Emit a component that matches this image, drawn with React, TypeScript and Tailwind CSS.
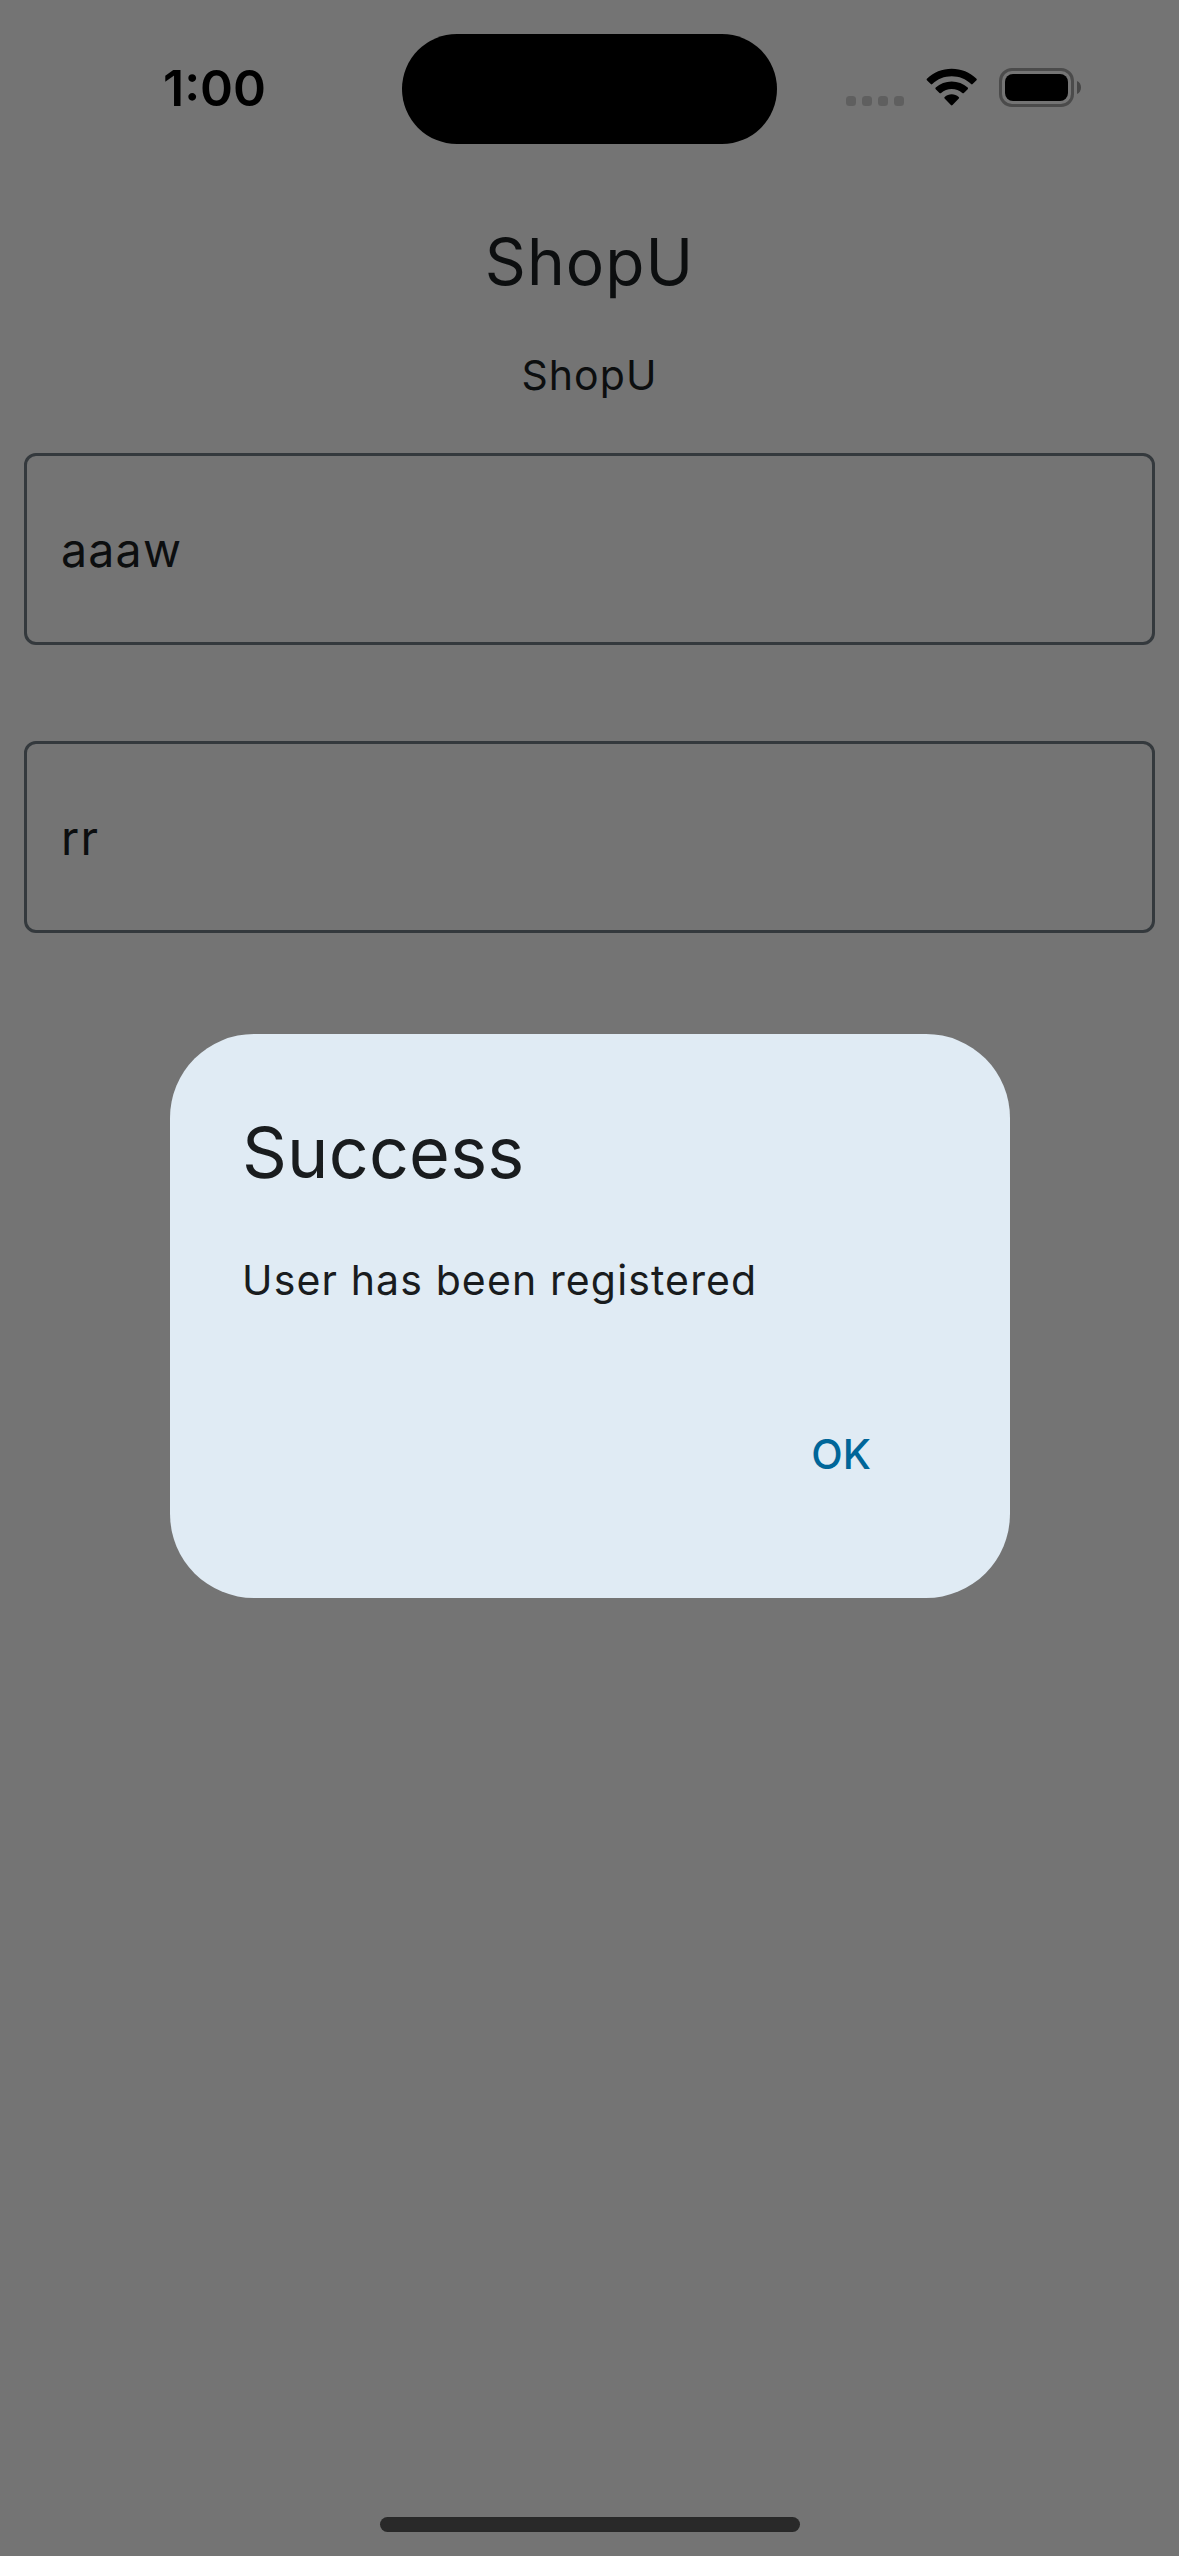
function SignalDots() {
  return (
    <div className="flex gap-1.5">
      {[0, 1, 2, 3].map((i) => (
        <span key={i} className="size-2.5 rounded-[3.5px] bg-[#5f5f5f]" />
      ))}
    </div>
  );
}

function WifiIcon() {
  return (
    <svg className="h-[38px] w-[52px]" viewBox="0 0 52 38" fill="black">
      <path d="M0.9 12.3 Q0.2 11.5 0.9 10.7 C7.5 4.1 16.2 0.7 25.7 0.7 C35.2 0.7 43.9 4.1 50.5 10.7 Q51.2 11.5 50.5 12.3 L46.6 16.1 Q45.9 16.7 45.1 16 C39.9 11 33 8.3 25.7 8.3 C18.4 8.3 11.5 11 6.3 16 Q5.5 16.7 4.8 16.1 Z" />
      <path d="M9.7 21.2 Q8.9 20.4 9.7 19.6 C14.1 15.6 19.7 13.5 25.7 13.5 C31.7 13.5 37.3 15.6 41.7 19.6 Q42.5 20.4 41.7 21.2 L37.9 25 Q37.1 25.7 36.3 25 C33.3 22.5 29.7 21.1 25.7 21.1 C21.7 21.1 18.1 22.5 15.1 25 Q14.3 25.7 13.5 25 Z" />
      <path d="M18.6 30.5 Q17.8 29.7 18.7 28.9 C20.7 27.2 23.1 26.3 25.7 26.3 C28.3 26.3 30.7 27.2 32.7 28.9 Q33.6 29.7 32.8 30.5 L26.5 37.1 Q25.7 37.9 24.9 37.1 Z" />
    </svg>
  );
}

function BatteryIcon() {
  return (
    <div className="flex items-center gap-[3px]">
      <div className="h-[39px] w-[75px] rounded-[13px] border-3 border-[#4b4b4b] p-[3px]">
        <div className="h-full rounded-[8px] bg-black" />
      </div>
      <svg className="h-[13px] w-1" viewBox="0 0 4 13" fill="#464646">
        <path d="M0 0 C2.6 1.2 4 3.6 4 6.5 C4 9.4 2.6 11.8 0 13 Z" />
      </svg>
    </div>
  );
}

function StatusBar() {
  return (
    <header className="flex h-[177px] items-start">
      <div className="w-[402px] pt-[58px] pl-[163px]">
        <span className="block text-[50px] leading-[60px] font-semibold text-black">1:00</span>
      </div>
      <div className="mt-[34px] h-[110px] w-[375px] rounded-full bg-black" />
      <div className="flex pt-[68px] pl-[69px]">
        <div className="pt-7">
          <SignalDots />
        </div>
        <div className="ml-[22px]">
          <WifiIcon />
        </div>
        <div className="ml-[21px]">
          <BatteryIcon />
        </div>
      </div>
    </header>
  );
}

function Field({ value }: { value: string }) {
  return (
    <div className="flex h-48 items-center rounded-[12px] border-3 border-[#34393d] pt-0.5 pl-[34px]">
      <span className="text-[46.5px] leading-[72px] tracking-[1.2px]">{value}</span>
    </div>
  );
}

function SuccessDialog() {
  return (
    <div className="fixed inset-0 flex items-center justify-center pt-[75px]">
      <section
        role="dialog"
        className="flex h-[564px] w-[840px] flex-col rounded-[84px] bg-[#e0ebf4] px-[72.5px] pt-[71.5px] text-[#191c1e]"
      >
        <h2 className="text-[70px] leading-[96px] tracking-[0.21px]">Success</h2>
        <p className="mt-[49px] text-[41px] leading-[60px] tracking-[1.13px]">User has been registered</p>
        <button className="mt-[114px] mr-[66px] self-end text-[41px] leading-[60px] font-medium tracking-[0.1px] text-[#006699]">
          OK
        </button>
      </section>
    </div>
  );
}

export default function App() {
  return (
    <main className="flex h-[2556px] w-[1179px] flex-col overflow-hidden bg-[#747474] font-['Inter',sans-serif] text-[#0c0e0f]">
      <StatusBar />
      <h1 className="mt-[45px] text-center text-[64px] leading-[80px] tracking-[1.06px]">ShopU</h1>
      <p className="mt-[43px] text-center text-[41px] leading-[60px] tracking-[1.1px]">ShopU</p>
      <div className="mt-12 flex flex-col gap-24 px-6">
        <Field value="aaaw" />
        <Field value="rr" />
      </div>
      <div className="mt-auto mb-6 ml-[380px] h-[15px] w-[420px] rounded-full bg-[#292929]" />
      <SuccessDialog />
    </main>
  );
}
